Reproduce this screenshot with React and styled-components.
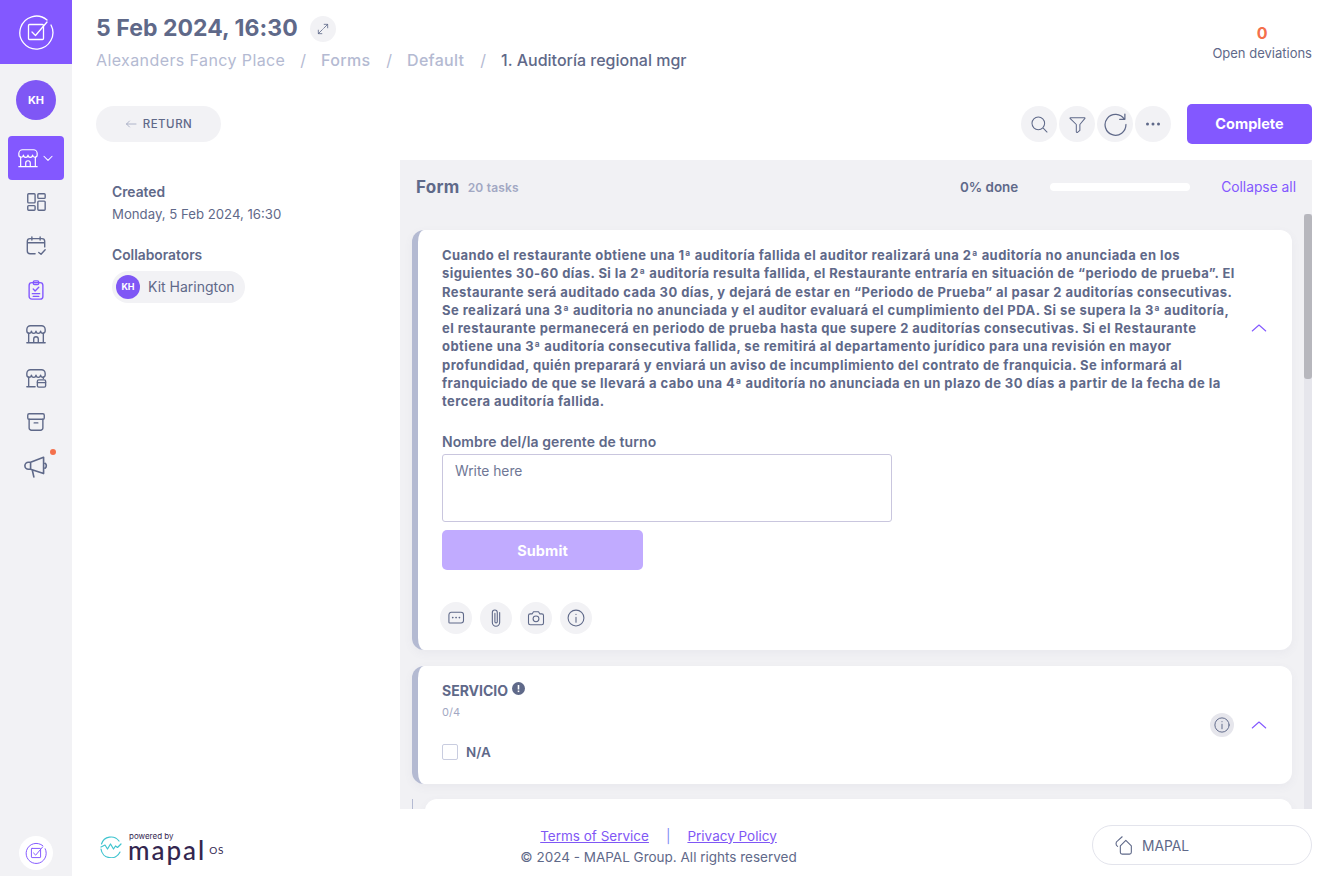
import React from 'react';
import styled, { createGlobalStyle } from 'styled-components';

const Global = createGlobalStyle`
  html, body { margin: 0; padding: 0; background: #fff; overflow: hidden; }
  * { box-sizing: border-box; }
  body { font-family: "Inter", "Noto Sans", sans-serif; color: #5f6989; }
`;

const Page = styled.div`
  width: 1329px; height: 876px; display: flex; overflow: hidden;
`;
const Sidebar = styled.nav`
  width: 72px; flex: none; background: #f2f2f5; display: flex; flex-direction: column; align-items: center;
`;
const LogoTile = styled.div`
  width: 72px; height: 64px; background: #8358ff; display: flex; align-items: center; justify-content: center;
`;
const Avatar = styled.div`
  width: ${p => p.$size}px; height: ${p => p.$size}px; border-radius: 50%; background: #7f57f5; color: #fff;
  font-size: ${p => p.$font}px; font-weight: 700; display: flex; align-items: center; justify-content: center; flex: none;
`;
const SideAvatar = styled(Avatar)`margin-top: 16px;`;
const StoreButton = styled.div`
  width: 56px; height: 44px; margin-top: 16px; background: #8358ff; border-radius: 4px;
  display: flex; align-items: center; justify-content: center; gap: 2px;
`;
const SideItem = styled.div`
  position: relative; width: 72px; height: 44px; display: flex; align-items: center; justify-content: center; flex: none;
`;
const Dot = styled.span`
  position: absolute; top: 5px; left: 50px; width: 6px; height: 6px; border-radius: 50%; background: #f4704c;
`;
const SideSpacer = styled.div`flex: 1;`;
const BottomLogo = styled.div`
  width: 34px; height: 34px; border-radius: 50%; background: #fff; margin-bottom: 6px;
  display: flex; align-items: center; justify-content: center;
`;
const Main = styled.div`
  flex: 1; min-width: 0; display: flex; flex-direction: column; height: 876px;
`;
const Header = styled.header`
  height: 104px; flex: none; padding: 14px 17px 0 24px; display: flex; justify-content: space-between;
`;
const TitleRow = styled.div`display: flex; align-items: center; gap: 12px; height: 29px;`;
const Title = styled.h1`
  margin: 0; font-size: 23px; line-height: 29px; font-weight: 700; color: #5f6989; letter-spacing: 0.05px;
`;
const RoundSmall = styled.div`
  width: 26px; height: 26px; border-radius: 50%; background: #f2f2f5; display: flex; align-items: center; justify-content: center;
`;
const Crumbs = styled.div`
  display: flex; margin-top: 8px; font-size: 16px; line-height: 19px; white-space: nowrap;
`;
const Crumb = styled.span`
  color: ${p => p.$current ? '#5f6989' : '#b4bad2'};
  margin-right: ${p => p.$gap ?? 0}px;
  font-weight: ${p => p.$weight ?? 400};
  letter-spacing: ${p => p.$track ?? 0}px;
`;
const Deviations = styled.div`
  display: flex; flex-direction: column; align-items: center; padding-top: 10px; 
`;
const DevCount = styled.div`color: #f4704c; font-size: 16px; line-height: 18px; font-weight: 700;`;
const DevLabel = styled.div`font-size: 13px; line-height: 22px; color: #5f6989;`;
const Toolbar = styled.div`
  height: 40px; flex: none; padding: 0 17px 0 24px; display: flex; align-items: center;
`;
const ReturnButton = styled.div`
  width: 125px; height: 36px; border-radius: 18px; background: #f2f2f5; display: flex; align-items: center; justify-content: center; gap: 6px;
  font-size: 11.5px; font-weight: 500; letter-spacing: 0.5px; color: #5f6989;
`;
const Spacer = styled.div`flex: 1;`;
const Tools = styled.div`display: flex; gap: 2px; margin-right: 16px;`;
const ToolButton = styled.div`
  width: 36px; height: 36px; border-radius: 50%; background: #f2f2f5; display: flex; align-items: center; justify-content: center;
`;
const CompleteButton = styled.div`
  width: 125px; height: 40px; border-radius: 5px; background: #8358ff; color: #fff; font-size: 14.5px; line-height: 40px; font-weight: 700;
  text-align: center;
`;
const Content = styled.div`
  flex: 1; min-height: 0; display: flex; margin-top: 16px; padding-right: 17px;
`;
const Info = styled.aside`
  width: 328px; flex: none; padding: 24px 0 0 40px;
`;
const InfoLabel = styled.div`font-size: 13.8px; line-height: 16px; font-weight: 600; color: #5f6989;`;
const InfoValue = styled.div`font-size: 13.2px; line-height: 16px; margin-top: 6px; color: #5f6989;`;
const CollabLabel = styled(InfoLabel)`margin-top: 25px;`;
const Chip = styled.div`
  display: inline-flex; align-items: center; gap: 8px; margin-top: 8px; height: 32px; width: 133px; padding: 0 4px; border-radius: 16px; background: #f2f2f5;
  font-size: 14px; line-height: 16px; color: #5f6989; white-space: nowrap;
`;
const ChipName = styled.span`margin-top: -1px;`;
const FormPanel = styled.section`
  flex: 1; min-width: 0; background: #f1f1f4; display: flex; flex-direction: column; height: 649px;
`;
const FormHead = styled.div`
  height: 54px; flex: none; padding: 0 16px; display: flex; align-items: center;
`;
const FormTitle = styled.span`font-size: 17px; letter-spacing: 0.3px; font-weight: 700; color: #5f6989;`;
const TaskCount = styled.span`font-size: 12px; letter-spacing: 0.2px; font-weight: 600; color: #a2a8c3; margin-left: 8px; padding-top: 1px;`;
const Done = styled.span`font-size: 13.4px; font-weight: 600; color: #5f6989; margin-left: 441px; width: 90px; white-space: nowrap;`;
const Progress = styled.div`width: 140px; height: 8px; border-radius: 4px; background: #fff;`;
const Collapse = styled.span`font-size: 13.8px; color: #8358ff; margin-left: auto; white-space: nowrap;`;
const ScrollArea = styled.div`
  position: relative; flex: 1; min-height: 0; overflow: hidden; padding: 16px 20px 0 12px;
`;
const Track = styled.div`
  position: absolute; right: 0; top: 0; bottom: 0; width: 8px; background: #e6e6ec;
`;
const Thumb = styled.div`
  width: 8px; height: 165px; background: #b7b7bd; border-radius: 3px;
`;
const Card = styled.article`
  position: relative; background: #fff; border-radius: 12px; border-left: ${p => p.$accent ? '6px solid #b4bad2' : '0'};
  box-shadow: 0 3px 10px rgba(95, 105, 137, 0.06); padding: ${p => p.$pad}; margin-bottom: ${p => p.$gap}px;
`;
const Group = styled.div`
  border-left: 1px solid #b4bad2; padding-left: 12px;
`;
const Paragraph = styled.p`
  margin: 0; font-size: 13px; line-height: 18.25px; font-weight: 700; color: #5f6989; letter-spacing: 0.44px;
`;
const Line = styled.span`display: block; white-space: nowrap;`;
const Toggle = styled.div`
  position: absolute; right: 24px; top: ${p => p.$top}px; width: 18px; height: 18px; display: flex; align-items: center; justify-content: center;
`;
const FieldLabel = styled.div`margin-top: 24px; font-size: 14px; letter-spacing: 0.1px; line-height: 16px; font-weight: 600; color: #5f6989;`;
const TextBox = styled.div`
  margin-top: 4px; width: 450px; height: 68px; border: 1px solid #c9c6de; border-radius: 3px; padding: 7px 12px;
  font-size: 13.8px; line-height: 18px; color: #6f7795;
`;
const SubmitButton = styled.div`
  margin-top: 8px; width: 201px; height: 40px; border-radius: 5px; background: #c1abff; color: #fff; font-size: 14.5px; font-weight: 700;
  display: flex; align-items: center; justify-content: center; letter-spacing: 0.1px;
`;
const Actions = styled.div`display: flex; gap: 8px; margin-top: 32px; margin-left: -2px;`;
const ActionButton = styled.div`
  width: 32px; height: 32px; border-radius: 50%; background: #f2f2f5; display: flex; align-items: center; justify-content: center;
`;
const SectionTitle = styled.div`
  display: flex; gap: 4px; font-size: 14px; line-height: 18px; font-weight: 700; color: #5f6989;
`;
const Sub = styled.div`font-size: 11px; line-height: 14px; color: #a2a8c3; margin-top: 5px;`;
const CheckRow = styled.label`
  display: flex; align-items: center; gap: 8px; margin-top: 25px; font-size: 13.5px; line-height: 16px; font-weight: 600; color: #5f6989;
`;
const CheckBox = styled.span`width: 16px; height: 16px; border: 1px solid #c9cde0; border-radius: 2px; display: block;`;
const InfoBadge = styled.div`
  position: absolute; right: 58px; top: 47px; width: 24px; height: 24px; border-radius: 50%; background: #e6e6ec;
  display: flex; align-items: center; justify-content: center;
`;
const Footer = styled.footer`
  height: 67px; flex: none; padding: 0 17px 0 28px; display: flex; align-items: center; justify-content: space-between; background: #fff;
  position: relative;
`;
const Brand = styled.div`display: flex; align-items: center; gap: 6px; width: 200px; margin-top: 8px;`;
const BrandText = styled.div`display: flex; flex-direction: column; color: #33264f;`;
const Powered = styled.div`font-size: 8px; line-height: 9px; padding-left: 1px;`;
const BrandName = styled.div`
  font-size: 26px; line-height: 19px; font-weight: 500; letter-spacing: 2px; display: flex; align-items: baseline; gap: 3px; font-family: "Lato", sans-serif;
`;
const BrandOs = styled.span`font-size: 10px; line-height: 10px; letter-spacing: 0.8px; font-weight: 400; transform: translateY(-6px);`;
const Legal = styled.div`display: flex; flex-direction: column; align-items: center; margin-right: 75px; padding-top: 10px;`;
const Links = styled.div`display: flex; align-items: center; gap: 17px; font-size: 13.5px; line-height: 19px; color: #7f8ff5;`;
const FootLink = styled.a`color: #7f57f5; text-decoration: underline;`;
const Copyright = styled.div`font-size: 13.5px; line-height: 23px; color: #5f6989;`;
const Tenant = styled.div`
  width: 220px; height: 40px; margin-top: 5px; border-radius: 20px; border: 1px solid #e3e4ec; display: flex; align-items: center; gap: 7px; padding-left: 20px;
  font-size: 13.8px; line-height: 20px; color: #5f6989;
`;
const TenantName = styled.span`margin-top: 1px;`;

const S = ({ children, size = 22, color = '#5f6989', w = 1.5, vb = 24 }) => (
  <svg width={size} height={size} viewBox={`0 0 ${vb} ${vb}`} fill="none" stroke={color} strokeWidth={w} strokeLinecap="round" strokeLinejoin="round">{children}</svg>
);
const Store = (p) => (
  <S {...p}>
    <path d="M2 21.500h20M4 21.500V11M20 21.500V11M9.500 21.500v-4a2.500 2.500 0 0 1 5 0v4" />
    <path d="M6 3h12a4 4 0 0 1 4 4v1.500a2.500 2.500 0 0 1-5 .3 2.500 2.500 0 0 1-5 0 2.500 2.500 0 0 1-5 0 2.500 2.500 0 0 1-5-.3V7a4 4 0 0 1 4-4Z" />
  </S>
);
const LogoMark = ({ size, color, w }) => (
  <svg width={size} height={size} viewBox="0 0 36 36" fill="none" stroke={color} strokeWidth={w} strokeLinecap="round" strokeLinejoin="round">
    <path d="M29 6A16.500 16.500 0 1 0 33 11" />
    <rect x="10.500" y="10.500" width="15" height="15" rx="1" />
    <path d="m14 18 3.500 3.500L29 8" />
  </svg>
);

const lines = [
  'Cuando el restaurante obtiene una 1ª auditoría fallida el auditor realizará una 2ª auditoría no anunciada en los',
  'siguientes 30-60 días. Si la 2ª auditoría resulta fallida, el Restaurante entraría en situación de “periodo de prueba”. El',
  'Restaurante será auditado cada 30 días, y dejará de estar en “Periodo de Prueba” al pasar 2 auditorías consecutivas.',
  'Se realizará una 3ª auditoria no anunciada y el auditor evaluará el cumplimiento del PDA. Si se supera la 3ª auditoría,',
  'el restaurante permanecerá en periodo de prueba hasta que supere 2 auditorías consecutivas. Si el Restaurante',
  'obtiene una 3ª auditoría consecutiva fallida, se remitirá al departamento jurídico para una revisión en mayor',
  'profundidad, quién preparará y enviará un aviso de incumplimiento del contrato de franquicia. Se informará al',
  'franquiciado de que se llevará a cabo una 4ª auditoría no anunciada en un plazo de 30 días a partir de la fecha de la',
  'tercera auditoría fallida.',
];

const Chevron = () => (
  <S size={18} color="#8358ff" w={1.4}><path d="m3 16 9-8 9 8" /></S>
);
const InfoIcon = ({ size = 18 }) => (
  <S size={size} w={1.3}><circle cx="12" cy="12" r="9.500" /><path d="M12 11v6M12 7.500v.2" /></S>
);

export default function App() {
  return (
    <Page>
      <Global />
      <Sidebar>
        <LogoTile><LogoMark size={36} color="#fff" w={1.3} /></LogoTile>
        <SideAvatar $size={40} $font={11}>KH</SideAvatar>
        <StoreButton>
          <Store size={22} color="#fff" w={1.3} />
          <S size={14} color="#fff" w={1.8}><path d="m5 9 7 7 7-7" /></S>
        </StoreButton>
        <SideItem>
          <S size={22}><rect x="3" y="3" width="8" height="10" rx="1" /><rect x="14" y="3" width="8" height="5" rx="1" /><rect x="3" y="16" width="8" height="5" rx="1" /><rect x="14" y="11" width="8" height="10" rx="1" /></S>
        </SideItem>
        <SideItem>
          <S size={22}><path d="M11 20.500H5.500a3 3 0 0 1-3-3V7a3 3 0 0 1 3-3h13a3 3 0 0 1 3 3v6M7.500 2v3.500M16.500 2v3.500M3 8.500h18" /><path d="m15 19 2.500 2 4.500-5" /></S>
        </SideItem>
        <SideItem>
          <S size={22} color="#8358ff"><rect x="4.500" y="4" width="15" height="18" rx="3" /><rect x="9" y="2" width="6" height="4" rx="1.500" /><path d="m9 11 2 2 4-4M8 16h8M9 19h6" /></S>
        </SideItem>
        <SideItem><Store size={22} /></SideItem>
        <SideItem>
          <S size={22}><path d="M2 21.500h9M4 21.500V11M20 11v1.500" /><path d="M6 3h12a4 4 0 0 1 4 4v1.500a2.500 2.500 0 0 1-5 .3 2.500 2.500 0 0 1-5 0 2.500 2.500 0 0 1-5 0 2.500 2.500 0 0 1-5-.3V7a4 4 0 0 1 4-4Z" /><rect x="13.500" y="14" width="9" height="8" rx="1.500" /><path d="M13.500 17h9" /></S>
        </SideItem>
        <SideItem>
          <S size={22}><rect x="3" y="3" width="18" height="6" rx="1.500" /><path d="M4.500 9v9.500a2.500 2.500 0 0 0 2.500 2.500h10a2.500 2.500 0 0 0 2.500-2.500V9M10 13h4" /></S>
        </SideItem>
        <SideItem>
          <Dot />
          <S size={26}><path d="M7 8.500 19 4v15L7 15H5a3 3 0 0 1 0-6.500ZM7 8.500V15M8.500 15.500 10 22M20.500 9.500a3 3 0 0 1 0 4.500" /></S>
        </SideItem>
        <SideSpacer />
        <BottomLogo><LogoMark size={22} color="#8358ff" w={1.6} /></BottomLogo>
      </Sidebar>
      <Main>
        <Header>
          <div>
            <TitleRow>
              <Title>5 Feb 2024, 16:30</Title>
              <RoundSmall>
                <S size={14} w={1.4}><path d="M14 4h6v6M20 4l-7 7M10 20H4v-6M4 20l7-7" /></S>
              </RoundSmall>
            </TitleRow>
            <Crumbs>
              <Crumb $gap={15} $track={0.4}>Alexanders Fancy Place</Crumb>
              <Crumb $gap={15}>/</Crumb>
              <Crumb $gap={16} $weight={500} $track={0.3}>Forms</Crumb>
              <Crumb $gap={15}>/</Crumb>
              <Crumb $gap={16} $weight={500} $track={0.3}>Default</Crumb>
              <Crumb $gap={15}>/</Crumb>
              <Crumb $current $weight={500}>1. Auditoría regional mgr</Crumb>
            </Crumbs>
          </div>
          <Deviations>
            <DevCount>0</DevCount>
            <DevLabel>Open deviations</DevLabel>
          </Deviations>
        </Header>
        <Toolbar>
          <ReturnButton>
            <S size={12} color="#9aa0bb" w={1.5}><path d="M22 12H3M9 6l-6 6 6 6" /></S>
            RETURN
          </ReturnButton>
          <Spacer />
          <Tools>
            <ToolButton><S size={19} w={1.3}><circle cx="10.500" cy="10.500" r="8" /><path d="m17 17 4.500 4.500" /></S></ToolButton>
            <ToolButton><S size={19} w={1.3}><path d="M3 3.500h18a.500.500 0 0 1 .4.800L15 12v7.500L12 22c-.8.300-1.500-.300-1.500-1v-9L2.600 4.300A.500.500 0 0 1 3 3.500Z" /></S></ToolButton>
            <ToolButton><S size={25} w={1.2}><path d="M20.500 7A10 10 0 1 0 22 12M21 2v5h-5" /></S></ToolButton>
            <ToolButton>
              <svg width="18" height="18" viewBox="0 0 18 18" fill="#5f6989"><circle cx="3.500" cy="9" r="1.500" /><circle cx="9" cy="9" r="1.500" /><circle cx="14.500" cy="9" r="1.500" /></svg>
            </ToolButton>
          </Tools>
          <CompleteButton>Complete</CompleteButton>
        </Toolbar>
        <Content>
          <Info>
            <InfoLabel>Created</InfoLabel>
            <InfoValue>Monday, 5 Feb 2024, 16:30</InfoValue>
            <CollabLabel>Collaborators</CollabLabel>
            <Chip><Avatar $size={24} $font={9}>KH</Avatar><ChipName>Kit Harington</ChipName></Chip>
          </Info>
          <FormPanel>
            <FormHead>
              <FormTitle>Form</FormTitle>
              <TaskCount>20 tasks</TaskCount>
              <Done>0% done</Done>
              <Progress />
              <Collapse>Collapse all</Collapse>
            </FormHead>
            <ScrollArea>
              <Track><Thumb /></Track>
              <Card $accent $gap={16} $pad="16px 24px 16px 24px">
                <Paragraph>{lines.map(l => <Line key={l}>{l}</Line>)}</Paragraph>
                <Toggle $top={89}><Chevron /></Toggle>
                <FieldLabel>Nombre del/la gerente de turno</FieldLabel>
                <TextBox>Write here</TextBox>
                <SubmitButton>Submit</SubmitButton>
                <Actions>
                  <ActionButton><S size={20} w={1.3}><path d="M6 5h12a3 3 0 0 1 3 3v7a3 3 0 0 1-3 3H4.500a1 1 0 0 1-1-1V8A3 3 0 0 1 6 5Z" /><path d="M8 11.500h.2M12 11.500h.2M16 11.500h.2" strokeWidth="2" /></S></ActionButton>
                  <ActionButton><S size={22} w={1.2}><path d="M16 6v11a4 4 0 0 1-8 0V6a2.700 2.700 0 0 1 5.400 0v10a1.300 1.300 0 0 1-2.600 0V7" /></S></ActionButton>
                  <ActionButton><S size={20} w={1.3}><path d="M5 7h2.500L9 4.500h6L16.500 7H19a2 2 0 0 1 2 2v9a2 2 0 0 1-2 2H5a2 2 0 0 1-2-2V9a2 2 0 0 1 2-2Z" /><circle cx="12" cy="13" r="3.500" /></S></ActionButton>
                  <ActionButton><InfoIcon size={20} /></ActionButton>
                </Actions>
              </Card>
              <Card $accent $gap={15} $pad="16px 24px 24px 24px">
                <SectionTitle>SERVICIO
                  <svg width="13" height="13" viewBox="0 0 13 13"><circle cx="6.500" cy="6.500" r="6.500" fill="#5f6989" /><rect x="5.700" y="3" width="1.600" height="4.500" fill="#fff" /><rect x="5.700" y="8.500" width="1.600" height="1.600" fill="#fff" /></svg>
                </SectionTitle>
                <Sub>0/4</Sub>
                <CheckRow><CheckBox />N/A</CheckRow>
                <InfoBadge><InfoIcon size={18} /></InfoBadge>
                <Toggle $top={50}><Chevron /></Toggle>
              </Card>
              <Group>
                <Card $gap={0} $pad="40px 0 0 0" />
              </Group>
            </ScrollArea>
          </FormPanel>
        </Content>
        <Footer>
          <Brand>
            <svg width="22" height="22" viewBox="0 0 22 22" fill="none" stroke="#3fc4cf" strokeWidth="1.200" strokeLinecap="round" strokeLinejoin="round">
              <path d="M19 5A10 10 0 0 0 1.500 8M1 13a10 10 0 0 0 19 3" />
              <path d="m1 11 4-2 2.500 4 3-5 3 5 2-3 2 1.500L21 8" />
            </svg>
            <BrandText>
              <Powered>powered by</Powered>
              <BrandName>mapal<BrandOs>OS</BrandOs></BrandName>
            </BrandText>
          </Brand>
          <Legal>
            <Links>
              <FootLink>Terms of Service</FootLink>|<FootLink>Privacy Policy</FootLink>
            </Links>
            <Copyright>© 2024 - MAPAL Group. All rights reserved</Copyright>
          </Legal>
          <Tenant>
            <S size={22} w={1.2}><path d="M10 22h8a2 2 0 0 0 2-2v-7l-6-6-6 6v7a2 2 0 0 0 2 2Z" /><path d="M10 3 5 7.500a3.500 3.500 0 0 0 0 6" /></S>
            <TenantName>MAPAL</TenantName>
          </Tenant>
        </Footer>
      </Main>
    </Page>
  );
}
